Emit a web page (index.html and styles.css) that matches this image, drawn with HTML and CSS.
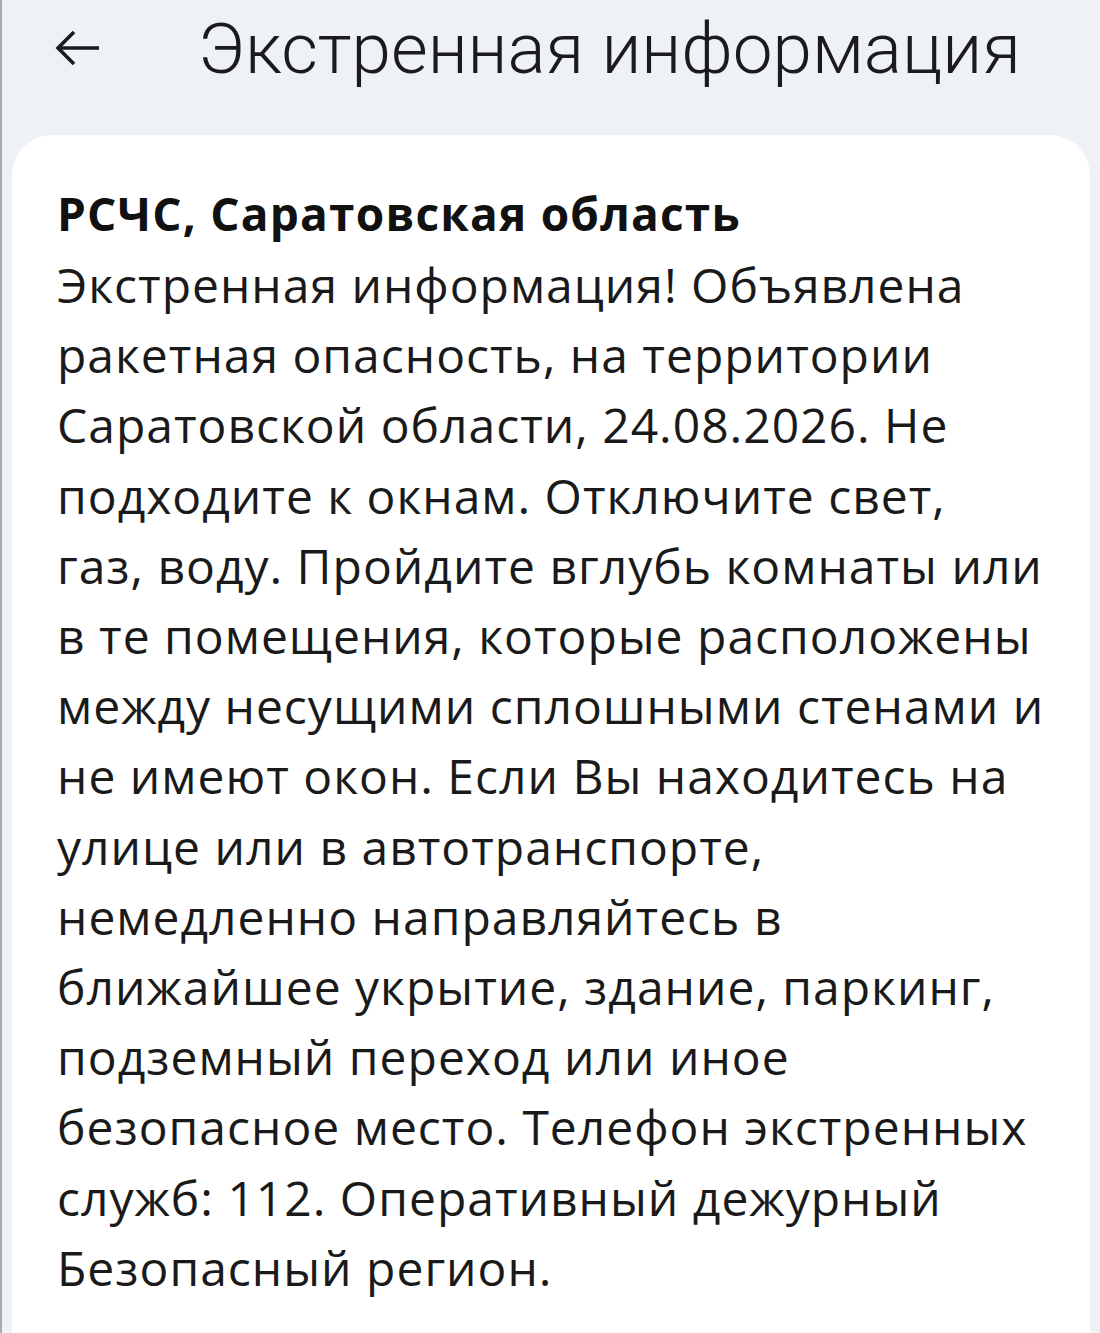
FILE: index.html
```html
<!DOCTYPE html>
<html lang="ru">
<head>
<meta charset="utf-8">
<link rel="stylesheet" href="styles.css">
</head>
<body>
<div class="screen">
  <header class="topbar">
    <button class="back" aria-label="Назад">
      <svg viewBox="0 0 46 46" width="46" height="46"><path d="M44 23H3M19 7L3 23l16 16" fill="none" stroke="#1b1b1b" stroke-width="3.6" stroke-linecap="butt" stroke-linejoin="miter"/></svg>
    </button>
    <h1 class="title">Экстренная информация</h1>
  </header>
  <main class="card">
    <h2 class="source">РСЧС, Саратовская область</h2>
    <p class="message">Экстренная информация! Объявлена<br>ракетная опасность, на территории<br>Саратовской области, 24.08.2026. Не<br>подходите к окнам. Отключите свет,<br>газ, воду. Пройдите вглубь комнаты или<br>в те помещения, которые расположены<br>между несущими сплошными стенами и<br>не имеют окон. Если Вы находитесь на<br>улице или в автотранспорте,<br>немедленно направляйтесь в<br>ближайшее укрытие, здание, паркинг,<br>подземный переход или иное<br>безопасное место. Телефон экстренных<br>служб: 112. Оперативный дежурный<br>Безопасный регион.</p>
  </main>
</div>
</body>
</html>
```
FILE: styles.css
```css
html, body {
  margin: 0;
  padding: 0;
  background: #eef2f7;
}
.screen {
  width: 1100px;
  height: 1333px;
  overflow: hidden;
  box-sizing: border-box;
  border-left: 2px solid #a9adb3;
  background: #eef2f7;
  display: flex;
  flex-direction: column;
}
.topbar {
  display: flex;
  align-items: center;
  flex-shrink: 0;
  height: 96px;
  padding: 0 0 0 53px;
  box-sizing: border-box;
  margin-bottom: 39px;
}
.back {
  border: 0;
  background: none;
  padding: 0;
  width: 46px;
  height: 46px;
  display: flex;
}
.title {
  margin: 1px 0 0 97px;
  font-family: Roboto, "Noto Sans", sans-serif;
  font-weight: 300;
  font-size: 71px;
  color: #1b1b1b;
  letter-spacing: 0;
  line-height: 1;
}
.card {
  margin: 0 10px 0 10px;
  background: #ffffff;
  border-radius: 40px 40px 0 0;
  padding: 48px 40px 40px 45px;
  flex: 1 0 auto;
}
.source {
  margin: 0;
  font-family: "Open Sans", "Noto Sans", sans-serif;
  font-weight: 700;
  font-size: 46px;
  line-height: 60px;
  letter-spacing: 1.2px;
  color: #111111;
}
.message {
  margin: 7px 0 0;
  font-family: "Open Sans", "Noto Sans", sans-serif;
  font-weight: 400;
  font-size: 48px;
  line-height: 70.2px;
  letter-spacing: 1px;
  color: #1a1a1a;
}
```
